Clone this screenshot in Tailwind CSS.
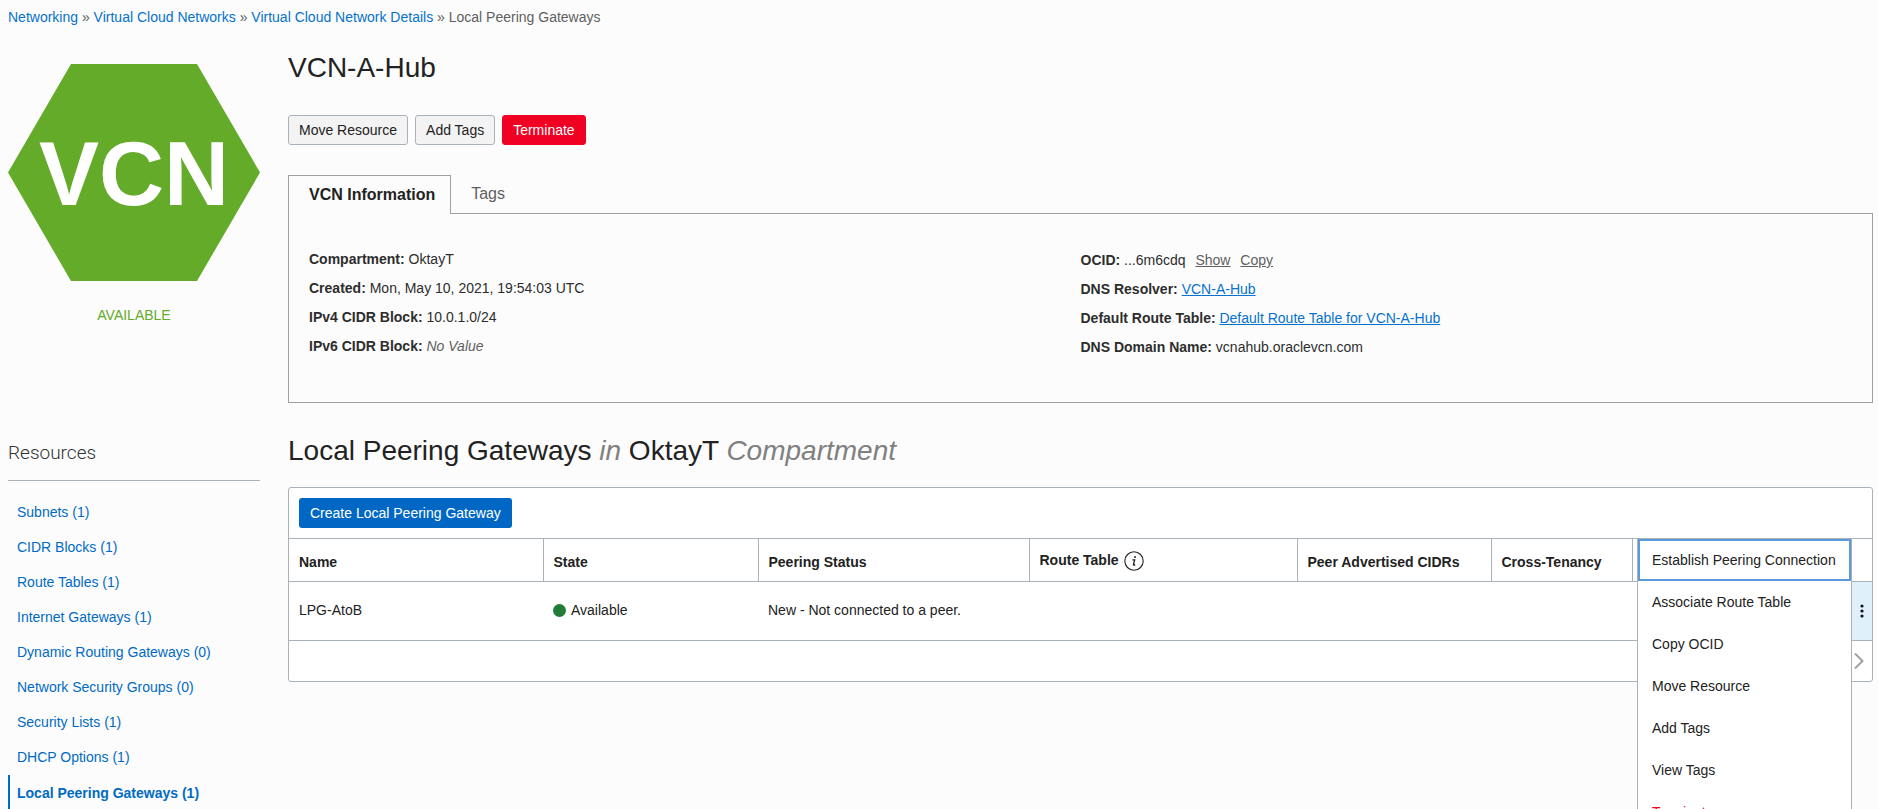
<!DOCTYPE html>
<html lang="en">
<head>
<meta charset="utf-8">
<title>Local Peering Gateways</title>
<script src="https://cdn.jsdelivr.net/npm/@tailwindcss/browser@4"></script>
</head>
<body class="bg-[#fcfcfc]">
<div class="h-screen overflow-hidden pt-[7px] pl-2 pr-[5px] font-['Liberation_Sans',Arial,sans-serif] text-sm leading-5 text-[#222222]">
  <nav aria-label="Breadcrumb" class="text-[#5f5f5f]">
    <a href="#" class="text-[#0572ce]">Networking</a> » <a href="#" class="text-[#0572ce]">Virtual Cloud Networks</a> » <a href="#" class="text-[#0572ce]">Virtual Cloud Network Details</a> » <span>Local Peering Gateways</span>
  </nav>

  <div class="mt-[21px] grid grid-cols-[252px_minmax(0,1fr)] gap-x-7">
    <aside class="pt-4">
      <svg viewBox="0 0 252 217" class="block w-full" role="img" aria-label="VCN">
        <polygon points="63,0 189,0 252,108.5 189,217 63,217 0,108.5" fill="#64ab29"/>
        <text x="31" y="141" font-family="Liberation Sans, Arial, sans-serif" font-weight="700" font-size="90" fill="#ffffff">VCN</text>
      </svg>
      <p class="mt-6 text-center text-[#64ab29]">AVAILABLE</p>
      <h2 class="mt-[113px] border-b border-[#a9b2ba] pb-[13px] font-['Roboto',sans-serif] text-[19px] leading-7 font-light pt-px text-[#333333]">Resources</h2>
      <ul class="mt-3.5">
        <li><a href="#" class="block h-[35px] pl-[9px] leading-[35px] text-[#006bc4]">Subnets (1)</a></li>
        <li><a href="#" class="block h-[35px] pl-[9px] leading-[35px] text-[#006bc4]">CIDR Blocks (1)</a></li>
        <li><a href="#" class="block h-[35px] pl-[9px] leading-[35px] text-[#006bc4]">Route Tables (1)</a></li>
        <li><a href="#" class="block h-[35px] pl-[9px] leading-[35px] text-[#006bc4]">Internet Gateways (1)</a></li>
        <li><a href="#" class="block h-[35px] pl-[9px] leading-[35px] text-[#006bc4]">Dynamic Routing Gateways (0)</a></li>
        <li><a href="#" class="block h-[35px] pl-[9px] leading-[35px] text-[#006bc4]">Network Security Groups (0)</a></li>
        <li><a href="#" class="block h-[35px] pl-[9px] leading-[35px] text-[#006bc4]">Security Lists (1)</a></li>
        <li><a href="#" class="block h-[35px] pl-[9px] leading-[35px] text-[#006bc4]">DHCP Options (1)</a></li>
        <li><a href="#" aria-current="page" class="block h-9 border-l-2 border-[#006bc4] pl-[7px] leading-9 font-bold text-[#006bc4]">Local Peering Gateways (1)</a></li>
      </ul>
    </aside>

    <main class="min-w-0">
      <h1 class="text-[28px] leading-10">VCN-A-Hub</h1>
      <div class="mt-[27px] flex gap-[7px]">
        <button type="button" class="h-[30px] rounded-[3px] border border-[#a9b2ba] bg-[#f3f3f3] px-[10px]">Move Resource</button>
        <button type="button" class="h-[30px] rounded-[3px] border border-[#a9b2ba] bg-[#f3f3f3] px-[10px]">Add Tags</button>
        <button type="button" class="h-[30px] rounded-[3px] border border-[#f00022] bg-[#f00022] px-[10px] text-white">Terminate</button>
      </div>

      <div role="tablist" class="mt-[30px] flex text-base">
        <button type="button" role="tab" aria-selected="true" class="z-10 -mb-px h-[39px] border border-b-0 border-[#a0a0a0] bg-[#fcfcfc] pr-[15px] pl-5 font-bold">VCN Information</button>
        <button type="button" role="tab" aria-selected="false" class="h-[38px] px-5 text-[#5f5f5f]">Tags</button>
      </div>
      <section class="grid h-[190px] grid-cols-2 border border-[#a0a0a0] pt-[31px] pr-5 pl-5 leading-[29px] text-[#2d2d2d]">
        <ul>
          <li><b>Compartment:</b> OktayT</li>
          <li><b>Created:</b> Mon, May 10, 2021, 19:54:03 UTC</li>
          <li><b>IPv4 CIDR Block:</b> 10.0.1.0/24</li>
          <li><b>IPv6 CIDR Block:</b> <i class="text-[#5f5f5f]">No Value</i></li>
        </ul>
        <ul class="pt-px">
          <li><b>OCID:</b> ...6m6cdq <button type="button" class="ml-1.5 text-[#5f5f5f] underline">Show</button> <button type="button" class="ml-1.5 text-[#5f5f5f] underline">Copy</button></li>
          <li><b>DNS Resolver:</b> <a href="#" class="text-[#0572ce] underline">VCN-A-Hub</a></li>
          <li><b>Default Route Table:</b> <a href="#" class="text-[#0572ce] underline">Default Route Table for VCN-A-Hub</a></li>
          <li><b>DNS Domain Name:</b> vcnahub.oraclevcn.com</li>
        </ul>
      </section>

      <h2 class="mt-7 text-[28px] leading-10">Local Peering Gateways <i class="text-[#808080]">in</i> OktayT <i class="text-[#808080]">Compartment</i></h2>

      <section class="relative mt-4 rounded-[3px] border border-[#a9b2ba] bg-white">
        <div class="px-[10px] py-[10px]">
          <button type="button" class="block h-[30px] rounded-[3px] bg-[#0067c5] px-[11px] text-white">Create Local Peering Gateway</button>
        </div>
        <table class="w-full table-fixed border-y border-[#a9b2ba] text-left">
          <colgroup>
            <col class="w-[254px]"><col class="w-[215px]"><col class="w-[271px]"><col><col class="w-[194px]"><col class="w-[141px]"><col class="w-[219px]"><col class="w-[21px]">
          </colgroup>
          <thead>
            <tr class="h-[43px] border-b border-[#a9b2ba]">
              <th class="border-r border-[#a9b2ba] px-[10px] pt-1">Name</th>
              <th class="border-r border-[#a9b2ba] px-[10px] pt-1">State</th>
              <th class="border-r border-[#a9b2ba] px-[10px] pt-1">Peering Status</th>
              <th class="border-r border-[#a9b2ba] px-[10px]">
                <span class="flex items-start gap-[5px]">Route Table
                  <svg class="mt-px size-5" viewBox="0 0 20 20" role="img" aria-label="More information">
                    <circle cx="10" cy="10" r="9.2" fill="none" stroke="#222222" stroke-width="1.1"/>
                    <circle cx="11" cy="6" r="1" fill="#222222"/>
                    <path d="M8.4 8.8H10.7L9.4 13.6Q9.2 14.7 11.2 13.6" fill="none" stroke="#222222" stroke-width="1.3"/>
                  </svg>
                </span>
              </th>
              <th class="border-r border-[#a9b2ba] px-[10px] pt-1">Peer Advertised CIDRs</th>
              <th class="border-r border-[#a9b2ba] px-[10px] pt-1">Cross-Tenancy</th>
              <th></th>
              <th></th>
            </tr>
          </thead>
          <tbody>
            <tr class="h-[59px]">
              <td class="px-[10px] pb-0.5">LPG-AtoB</td>
              <td class="px-[10px] pb-0.5"><span class="flex items-center gap-[5px]"><span class="size-[13px] rounded-full bg-[#217c38]"></span>Available</span></td>
              <td class="px-[10px] pb-0.5">New - Not connected to a peer.</td>
              <td></td><td></td><td></td><td></td>
              <td class="bg-[#dff0fb]">
                <button type="button" aria-label="Actions" class="flex w-full justify-center">
                  <svg class="h-4 w-1" viewBox="0 0 4 16" fill="#111111"><circle cx="2" cy="3" r="1.6"/><circle cx="2" cy="8" r="1.6"/><circle cx="2" cy="13" r="1.6"/></svg>
                </button>
              </td>
            </tr>
          </tbody>
        </table>
        <div class="flex h-10 items-center justify-end pr-2">
          <button type="button" aria-label="Next page">
            <svg class="block h-4 w-[10px]" viewBox="0 0 10 16" fill="none" stroke="#a0a0a0" stroke-width="2"><path d="M1 0.5L8.5 8L1 15.5"/></svg>
          </button>
        </div>

        <div role="menu" class="absolute top-[50px] right-5 z-20 w-[215px] border border-[#a9b2ba] bg-white">
          <button type="button" role="menuitem" class="block h-[42px] w-full border-2 border-[#5b9bdc] px-3 pb-px text-left">Establish Peering Connection</button>
          <button type="button" role="menuitem" class="block h-[42px] w-full px-[14px] pb-px text-left">Associate Route Table</button>
          <button type="button" role="menuitem" class="block h-[42px] w-full px-[14px] pb-px text-left">Copy OCID</button>
          <button type="button" role="menuitem" class="block h-[42px] w-full px-[14px] pb-px text-left">Move Resource</button>
          <button type="button" role="menuitem" class="block h-[42px] w-full px-[14px] pb-px text-left">Add Tags</button>
          <button type="button" role="menuitem" class="block h-[42px] w-full px-[14px] pb-px text-left">View Tags</button>
          <button type="button" role="menuitem" class="block h-[42px] w-full px-[14px] pb-px text-left text-[#f00022]">Terminate</button>
        </div>
      </section>
    </main>
  </div>
</div>
</body>
</html>
